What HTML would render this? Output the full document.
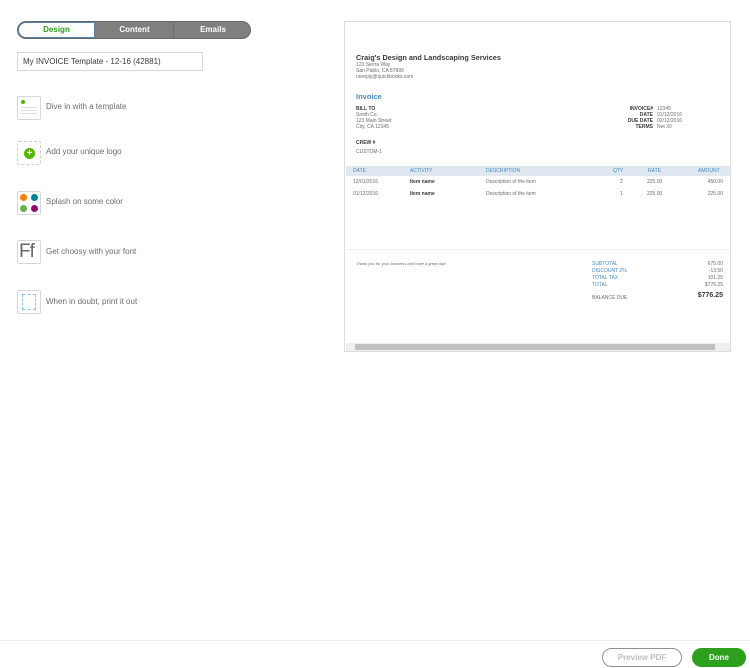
<!DOCTYPE html>
<html><head><style>
*{margin:0;padding:0;box-sizing:border-box}
body{width:750px;height:668px;background:#fff;font-family:"Liberation Sans",sans-serif;position:relative;overflow:hidden;color:#393a3d}
.a{position:absolute;white-space:nowrap}
.tabs{left:17px;top:21px;width:234px;height:18px;border-radius:9px;background:#7f7f7f;overflow:hidden;border:1px solid #666}
.tab{position:absolute;top:0;height:16px;line-height:16px;text-align:center;font-size:8px;font-weight:bold;color:#fff}
.ic{position:absolute;left:17px;width:24px;height:24px;border:1px solid #d4d7dc;border-radius:2px;background:#fff}
.lbl{font-size:8px;color:#6b6c72;left:46px}
.s{font-size:5px;color:#6b6c72;line-height:6px}
.b{font-weight:bold;color:#393a3d}
.bl{color:#4a8ac0}
</style></head><body>
<div class="a tabs">
 <div class="tab" style="left:0;width:77px;background:#fff;color:#2ca01c;border-radius:8px 0 0 8px;border:1px solid #5a7fb0;height:16px;line-height:14px">Design</div>
 <div class="tab" style="left:78px;width:78px;border-right:1px solid #6e6e6e">Content</div>
 <div class="tab" style="left:156px;width:78px">Emails</div>
</div>
<div class="a" style="left:17px;top:52px;width:186px;height:19px;border:1px solid #d4d7dc;font-size:8px;line-height:17px;padding-left:5px;color:#393a3d">My INVOICE Template - 12-16 (42881)</div>

<div class="ic" style="top:96px"><div style="position:absolute;left:3px;top:3px;width:4px;height:4px;border-radius:50%;background:#53b700"></div><div style="position:absolute;left:3px;right:3px;top:10px;height:1px;background:#ddd"></div><div style="position:absolute;left:3px;right:3px;top:13px;height:1px;background:#ddd"></div><div style="position:absolute;left:3px;right:3px;top:16px;height:1px;background:#ddd"></div></div>
<div class="a lbl" style="top:102px">Dive in with a template</div>
<div class="ic" style="top:141px;border:1px dashed #ccc"><div style="position:absolute;left:6px;top:6px;width:11px;height:11px;border-radius:50%;background:#53b700;color:#fff;font-size:10px;line-height:11px;text-align:center;font-weight:bold">+</div></div>
<div class="a lbl" style="top:147px">Add your unique logo</div>
<div class="ic" style="top:191px">
 <div style="position:absolute;left:2px;top:2px;width:7px;height:7px;border-radius:50%;background:#ff8000"></div>
 <div style="position:absolute;left:13px;top:2px;width:7px;height:7px;border-radius:50%;background:#00838f"></div>
 <div style="position:absolute;left:2px;top:13px;width:7px;height:7px;border-radius:50%;background:#6ab04c"></div>
 <div style="position:absolute;left:13px;top:13px;width:7px;height:7px;border-radius:50%;background:#8e0b6a"></div></div>
<div class="a lbl" style="top:197px">Splash on some color</div>
<div class="ic" style="top:240px;font-family:'Liberation Sans',sans-serif;font-size:19px;color:#666;line-height:22px;padding-left:1px;letter-spacing:-1px">Ff</div>
<div class="a lbl" style="top:247px">Get choosy with your font</div>
<div class="ic" style="top:290px"><div style="position:absolute;left:4px;right:4px;top:3px;bottom:3px;border:1px dashed #7cc4ea"></div></div>
<div class="a lbl" style="top:297px">When in doubt, print it out</div>

<div class="a" style="left:344px;top:21px;width:387px;height:331px;border:1px solid #ddd;background:#fff">
 <div class="a b" style="left:11px;top:31px;font-size:7.3px">Craig's Design and Landscaping Services</div>
 <div class="a s" style="left:11px;top:40px">123 Sierra Way<br>San Pablo, CA 87999<br>noreply@quickbooks.com</div>
 <div class="a bl" style="left:11px;top:70px;font-size:7.5px;font-weight:bold">Invoice</div>
 <div class="a s" style="left:11px;top:84px"><span class="b">BILL TO</span><br>Smith Co.<br>123 Main Street<br>City, CA 12345</div>
 <div class="a s" style="left:248px;top:84px;text-align:right;width:60px" ><span class="b">INVOICE#<br>DATE<br>DUE DATE<br>TERMS</span></div>
 <div class="a s" style="left:312px;top:84px">12345<br>01/12/2016<br>02/12/2016<br>Net 30</div>
 <div class="a s b" style="left:11px;top:118px">CREW #</div>
 <div class="a s" style="left:11px;top:127px">CUSTOM-1</div>
 <div class="a" style="left:1px;top:144px;width:384px;height:10px;background:#dfe8f0"></div>
 <div class="a s bl" style="left:8px;top:146px">DATE</div>
 <div class="a s bl" style="left:65px;top:146px">ACTIVITY</div>
 <div class="a s bl" style="left:141px;top:146px">DESCRIPTION</div>
 <div class="a s bl" style="left:268px;top:146px">QTY</div>
 <div class="a s bl" style="left:303px;top:146px">RATE</div>
 <div class="a s bl" style="left:353px;top:146px">AMOUNT</div>
 <div class="a s" style="left:8px;top:157px">12/01/2016<br><br>01/12/2016</div>
 <div class="a s b" style="left:65px;top:157px">Item name<br><br>Item name</div>
 <div class="a s" style="left:141px;top:157px">Description of the item<br><br>Description of the item</div>
 <div class="a s" style="left:275px;top:157px">2<br><br>1</div>
 <div class="a s" style="left:302px;top:157px">225.00<br><br>225.00</div>
 <div class="a s" style="left:350px;top:157px;width:28px;text-align:right">450.00<br><br>225.00</div>
 <div class="a" style="left:1px;top:227px;width:384px;height:1px;background:#eee"></div>
 <div class="a s" style="left:11px;top:239px;font-style:italic;font-size:4px">Thank you for your business and have a great day!</div>
 <div class="a s bl" style="left:247px;top:239px;line-height:7px">SUBTOTAL<br>DISCOUNT 2%<br>TOTAL TAX<br>TOTAL</div>
 <div class="a s" style="left:340px;top:239px;width:38px;text-align:right;line-height:7px">675.00<br>-13.50<br>101.25<br>$776.25</div>
 <div class="a s" style="left:247px;top:273px">BALANCE DUE</div>
 <div class="a b" style="left:340px;top:270px;width:38px;text-align:right;font-size:7px">$776.25</div>
 <div class="a" style="left:1px;top:321px;width:384px;height:8px;background:#f0f0f0"></div>
 <div class="a" style="left:10px;top:322px;width:360px;height:6px;background:#c1c1c1"></div>
</div>

<div class="a" style="left:0;top:640px;width:750px;height:1px;background:#eceef1"></div>
<div class="a" style="left:602px;top:648px;width:80px;height:19px;border:1px solid #8d9096;border-radius:10px;font-size:8px;font-weight:bold;color:#babec5;text-align:center;line-height:17px">Preview PDF</div>
<div class="a" style="left:692px;top:648px;width:54px;height:19px;background:#2ca01c;border-radius:10px;font-size:8px;font-weight:bold;color:#fff;text-align:center;line-height:19px">Done</div>
</body></html>
